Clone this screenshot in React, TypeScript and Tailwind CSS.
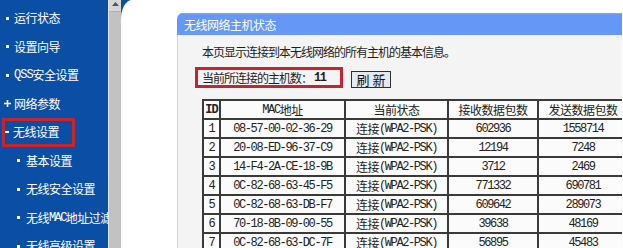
import React from "react";

const rows = [
  ["1", "08-57-00-02-36-29", "602936", "1558714"],
  ["2", "20-08-ED-96-37-C9", "12194", "7248"],
  ["3", "14-F4-2A-CE-18-9B", "3712", "2469"],
  ["4", "0C-82-68-63-45-F5", "771332", "690781"],
  ["5", "0C-82-68-63-DB-F7", "609642", "289073"],
  ["6", "70-18-8B-09-00-55", "39638", "48169"],
  ["7", "0C-82-68-63-DC-7F", "56895", "45483"],
];

function Mono({ children, className = "" }: { children: React.ReactNode; className?: string }) {
  return (
    <span className={"font-['Liberation_Mono',monospace] text-[12px] tracking-[-1.4px] " + className}>
      {children}
    </span>
  );
}

function MenuItem({ children, bullet = "dot", sub = false }: { children: React.ReactNode; bullet?: string; sub?: boolean }) {
  return (
    <div className={"flex h-[28.5px] items-center " + (sub ? "pl-[17px]" : "pl-[6px]")}>
      {bullet === "plus" ? (
        <svg width="7" height="7" viewBox="0 0 7 7" className="-ml-[2px] mr-[3px] shrink-0">
          <path d="M0 3.5h7M3.5 0v7" stroke="white" strokeWidth="1.6" />
        </svg>
      ) : (
        <span className={sub ? "mr-[6px] inline-block h-[3px] w-[3px] shrink-0 bg-white" : "mr-[5px] inline-block h-[3px] w-[3px] shrink-0 bg-white"} />
      )}
      {children}
    </div>
  );
}

function Sidebar() {
  return (
    <div className="w-[108px] shrink-0 overflow-hidden whitespace-nowrap bg-[#0b4ea6] pt-[4px] text-[12px] tracking-[-0.5px] text-white">
      <MenuItem>运行状态</MenuItem>
      <MenuItem>设置向导</MenuItem>
      <MenuItem>
        <Mono className="tracking-[-1px]">QSS</Mono>安全设置
      </MenuItem>
      <MenuItem bullet="plus">网络参数</MenuItem>
      <div className="ml-[2px] flex h-[28.5px] w-[73px] items-center border-[3px] border-[#c8242c]">
        <span className="mr-[4px] inline-block h-[2px] w-[4px] shrink-0 bg-white" />
        无线设置
      </div>
      <MenuItem sub>基本设置</MenuItem>
      <MenuItem sub>无线安全设置</MenuItem>
      <MenuItem sub>
        无线<Mono className="tracking-[-1.6px]">MAC</Mono>地址过滤
      </MenuItem>
      <MenuItem sub>无线高级设置</MenuItem>
    </div>
  );
}

function Scrollbar() {
  return (
    <div className="flex w-[13px] shrink-0 flex-col border-l border-[#e4e4e4]">
      <div className="flex h-[12px] items-start justify-center border-b border-[#b0b0b0] bg-[#d6d6d6] pt-[2px]">
        <svg width="7" height="4" viewBox="0 0 7 4">
          <path d="M0 4L3.5 0L7 4Z" fill="#555" />
        </svg>
      </div>
      <div className="flex-1 bg-[#c2c2c2]" />
    </div>
  );
}

function Cell({ children }: { children: React.ReactNode }) {
  return (
    <td className="border-2 border-[#3a3a3a] p-0">
      <div className="flex h-[17px] items-center justify-center overflow-hidden whitespace-nowrap leading-none">{children}</div>
    </td>
  );
}

function Panel() {
  return (
    <div className="flex h-full w-[445px] flex-col overflow-hidden rounded-tl-[6px]">
      <div className="h-[22px] shrink-0 border-t border-[#8aa8e2] bg-[#6497f6] pl-[7px] text-[12px] leading-[21px] tracking-[-0.5px] text-white">
        无线网络主机状态
      </div>
      <div className="flex-1 border-l border-[#dcd2bf] bg-[#f4f4f4] pl-[24px] pt-[9px] text-[#1e1e1e]">
        <p className="text-[12px] leading-[16px] tracking-[-1px]">本页显示连接到本无线网络的所有主机的基本信息。</p>
        <div className="mt-[7px] flex items-end">
          <div className="-ml-[7px] flex h-[21px] w-[148px] items-center border-[3px] border-[#c4252c] pl-[4px] text-[12px] tracking-[-1px]">
            当前所连接的主机数：<Mono className="ml-[2px] font-bold tracking-[-0.5px]">11</Mono>
          </div>
          <button className="ml-[8px] h-[17px] w-[40px] border border-[#2e2e2e] bg-[#e4e9f3] p-0 text-[13px] leading-[15px] text-[#111]">
            刷 新
          </button>
        </div>
        <table className="mt-[11px] w-[425px] table-fixed border-collapse bg-[#fbfbfb] text-[12px] tracking-[-0.5px] text-[#222]">
          <colgroup>
            <col className="w-[17px]" />
            <col className="w-[125px]" />
            <col className="w-[103px]" />
            <col className="w-[90px]" />
            <col className="w-[90px]" />
          </colgroup>
          <thead>
            <tr>
              <Cell>
                <Mono className="font-bold tracking-[-1px]">ID</Mono>
              </Cell>
              <Cell>
                <Mono>MAC</Mono>地址
              </Cell>
              <Cell>当前状态</Cell>
              <Cell>接收数据包数</Cell>
              <Cell>发送数据包数</Cell>
            </tr>
          </thead>
          <tbody>
            {rows.map((r) => (
              <tr key={r[0]}>
                <Cell>
                  <Mono>{r[0]}</Mono>
                </Cell>
                <Cell>
                  <Mono>{r[1]}</Mono>
                </Cell>
                <Cell>
                  连接<Mono>(WPA2-PSK)</Mono>
                </Cell>
                <Cell>
                  <Mono>{r[2]}</Mono>
                </Cell>
                <Cell>
                  <Mono>{r[3]}</Mono>
                </Cell>
              </tr>
            ))}
          </tbody>
        </table>
      </div>
    </div>
  );
}

export default function App() {
  return (
    <div className="flex h-[248px] w-[623px] overflow-hidden bg-white font-['Noto_Sans_CJK_SC',sans-serif]">
      <Sidebar />
      <Scrollbar />
      <div className="min-w-0 flex-1 bg-[#0b4ea6]">
        <div className="h-full rounded-tl-[11px_19px] bg-white pl-[56px] pt-[13px]">
          <Panel />
        </div>
      </div>
    </div>
  );
}
